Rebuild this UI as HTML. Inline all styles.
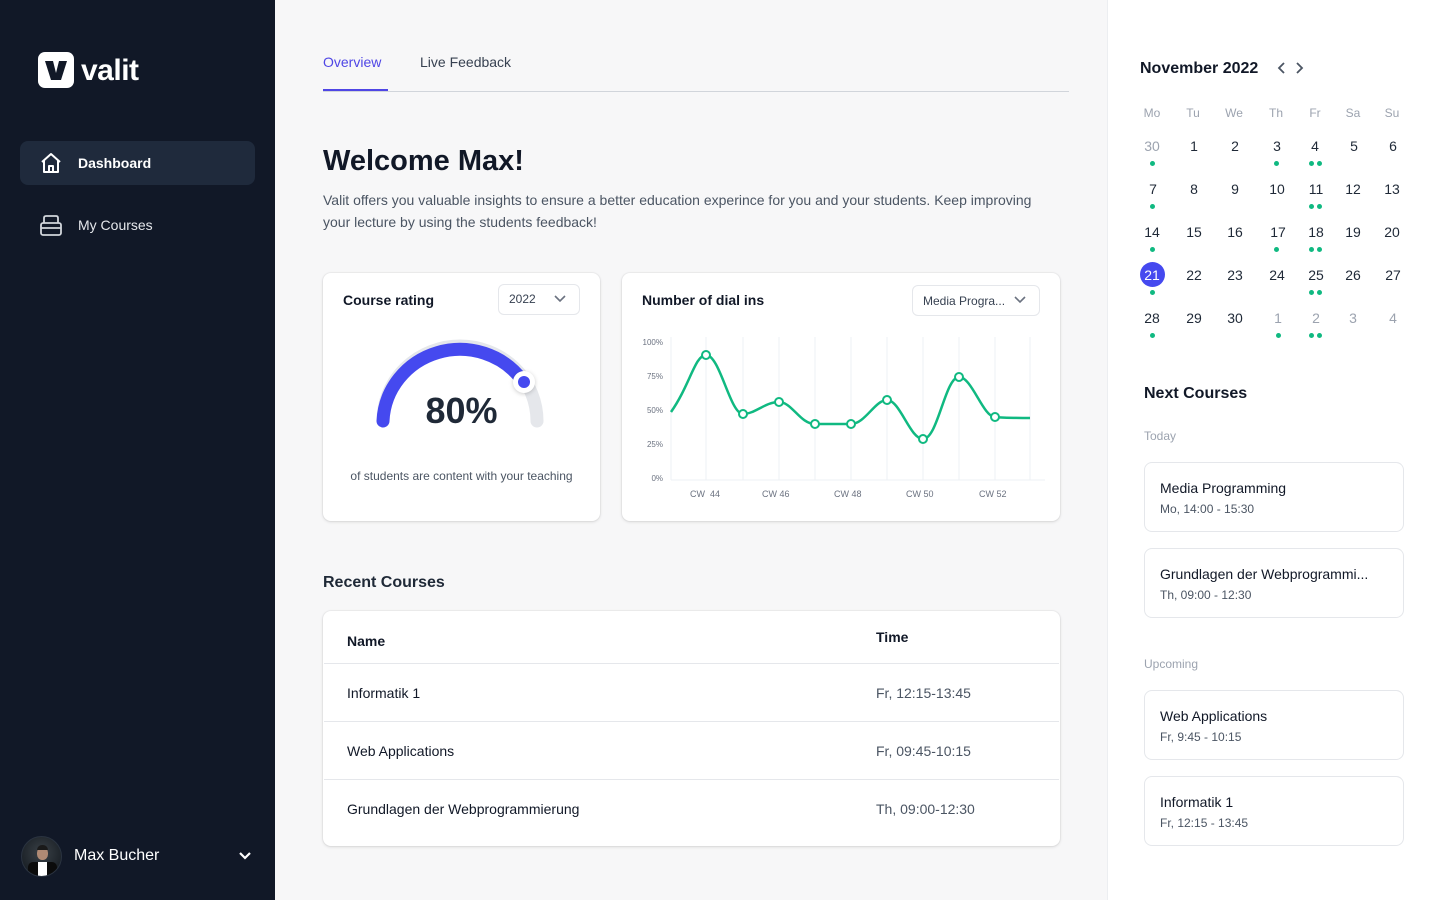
<!DOCTYPE html>
<html><head><meta charset="utf-8"><style>
*{margin:0;padding:0;box-sizing:border-box}
body{width:1440px;height:900px;overflow:hidden;font-family:"Liberation Sans",sans-serif;background:#f7f7f8;position:relative;color:#111827}
.a{position:absolute}
.side{left:0;top:0;width:275px;height:900px;background:#111827}
.right{left:1107px;top:0;width:333px;height:900px;background:#fff;border-left:1px solid #eceef1}
.card{background:#fff;border-radius:8px;box-shadow:0 1px 3px rgba(0,0,0,.12),0 0 0 1px rgba(0,0,0,.03)}
.sel{border:1px solid #e5e7eb;border-radius:6px;font-size:12px;color:#374151;background:#fff}
.cal{font-size:14px;color:#1f2937;text-align:center;width:30px}
.dot{width:5px;height:5px;border-radius:50%;background:#10b981}
.nc{left:1144px;width:260px;height:70px;border:1px solid #e5e7eb;border-radius:8px;background:#fff}
.nc b{position:absolute;left:15px;top:17px;font-size:14px;font-weight:normal;color:#111827}
.nc span{position:absolute;left:15px;top:39px;font-size:12px;color:#4b5563}
.row{left:324px;width:735px;height:1px;background:#e5e7eb}
.tn{left:347px;font-size:14px;color:#111827}
.tt{left:876px;font-size:14px;color:#4b5563}
.yl{font-size:8px;color:#6b7280;left:636px;width:27px;text-align:right}
.xl{font-size:9px;color:#6b7280}
</style></head><body>
<div class="a side"></div>
<div class="a" style="left:38px;top:52px;width:36px;height:36px;background:#fff;border-radius:7px"></div>
<svg class="a" style="left:38px;top:52px" width="36" height="36"><path d="M7 9 L15 9 L18 21 L21 9 L29 9 L23 28 L13 28 Z" fill="#111827"/></svg>
<div class="a" style="left:81px;top:54px;font-size:30px;font-weight:bold;color:#fff;letter-spacing:-0.5px">valit</div>
<div class="a" style="left:20px;top:141px;width:235px;height:44px;background:#1f2a3c;border-radius:8px"></div>
<svg class="a" style="left:39px;top:151px" width="24" height="24" fill="none" stroke="#fff" stroke-width="2" stroke-linejoin="round"><path d="M3 11 L12 3 L21 11 M5 9 V21 H19 V9 M10 21 V15 H14 V21"/></svg>
<div class="a" style="left:78px;top:155px;font-size:14px;font-weight:bold;color:#fff">Dashboard</div>
<svg class="a" style="left:39px;top:213px" width="24" height="24" fill="none" stroke="#d1d5db" stroke-width="1.8" stroke-linejoin="round"><rect x="2" y="10" width="20" height="12" rx="2"/><path d="M5 10 V5 Q5 3 7 3 H17 Q19 3 19 5 V10 M2 15 H22"/></svg>
<div class="a" style="left:78px;top:217px;font-size:14px;color:#e5e7eb">My Courses</div>
<div class="a" style="left:21px;top:836px;width:41px;height:41px;border-radius:50%;background:radial-gradient(circle at 50% 40%,#3a4147,#1c2228 70%);overflow:hidden;border:1px solid #2a3340"><div style="position:absolute;left:15px;top:10px;width:11px;height:13px;border-radius:45%;background:#b08a74"></div><div style="position:absolute;left:15px;top:8px;width:11px;height:5px;border-radius:5px 5px 0 0;background:#1a1a1a"></div><div style="position:absolute;left:16px;top:25px;width:9px;height:16px;background:#fff"></div><div style="position:absolute;left:6px;top:25px;width:10px;height:16px;background:#0b0b0b;border-radius:5px 0 0 0"></div><div style="position:absolute;left:25px;top:25px;width:10px;height:16px;background:#0b0b0b;border-radius:0 5px 0 0"></div></div>
<div class="a" style="left:74px;top:847px;font-size:16px;color:#fff">Max Bucher</div>
<svg class="a" style="left:237px;top:849px" width="16" height="14" fill="none" stroke="#fff" stroke-width="2.2"><path d="M3 4 L8 9 L13 4"/></svg>

<div class="a" style="left:323px;top:54px;font-size:14px;color:#4f46e5">Overview</div>
<div class="a" style="left:420px;top:54px;font-size:14px;color:#374151">Live Feedback</div>
<div class="a" style="left:323px;top:91px;width:746px;height:1px;background:#d1d5db"></div>
<div class="a" style="left:323px;top:89px;width:65px;height:2px;background:#4f46e5"></div>
<div class="a" style="left:323px;top:145px;font-size:29px;font-weight:bold;color:#111827">Welcome Max!</div>
<div class="a" style="left:323px;top:189px;width:728px;font-size:14px;line-height:22px;color:#4b5563">Valit offers you valuable insights to ensure a better education experince for you and your students. Keep improving your lecture by using the students feedback!</div>

<div class="a card" style="left:323px;top:273px;width:277px;height:248px"></div>
<div class="a" style="left:343px;top:292px;font-size:14px;font-weight:bold;color:#111827">Course rating</div>
<div class="a sel" style="left:498px;top:284px;width:82px;height:31px;padding:7px 10px">2022</div>
<svg class="a" style="left:553px;top:293px" width="14" height="12" fill="none" stroke="#6b7280" stroke-width="1.6"><path d="M2 3 L7 8 L12 3"/></svg>
<svg class="a" style="left:323px;top:273px" width="277" height="248">
<path d="M60 148 A77 75 0 0 1 214 148" fill="none" stroke="#e5e7eb" stroke-width="13" stroke-linecap="round"/>
<path d="M60 148 A77 75 0 0 1 199 107" fill="none" stroke="#4549ef" stroke-width="13" stroke-linecap="round"/>
<circle cx="201" cy="109" r="11" fill="#fff" style="filter:drop-shadow(0 1px 2px rgba(0,0,0,.2))"/>
<circle cx="201" cy="109" r="6" fill="#4549ef"/>
</svg>
<div class="a" style="left:323px;top:390px;width:277px;text-align:center;font-size:36px;font-weight:bold;color:#1f2937">80%</div>
<div class="a" style="left:323px;top:469px;width:277px;text-align:center;font-size:12px;color:#4b5563">of students are content with your teaching</div>

<div class="a card" style="left:622px;top:273px;width:438px;height:248px"></div>
<div class="a" style="left:642px;top:292px;font-size:14px;font-weight:bold;color:#111827">Number of dial ins</div>
<div class="a sel" style="left:912px;top:285px;width:128px;height:31px;padding:8px 10px">Media Progra...</div>
<svg class="a" style="left:1013px;top:294px" width="14" height="12" fill="none" stroke="#6b7280" stroke-width="1.6"><path d="M2 3 L7 8 L12 3"/></svg>
<div class="a yl" style="top:338px">100%</div><div class="a yl" style="top:372px">75%</div><div class="a yl" style="top:406px">50%</div><div class="a yl" style="top:440px">25%</div><div class="a yl" style="top:474px">0%</div>
<div class="a xl" style="left:690px;top:489px">CW &nbsp;44</div><div class="a xl" style="left:762px;top:489px">CW 46</div><div class="a xl" style="left:834px;top:489px">CW 48</div><div class="a xl" style="left:906px;top:489px">CW 50</div><div class="a xl" style="left:979px;top:489px">CW 52</div>
<svg class="a" style="left:0;top:0" width="1100" height="520">
<g stroke="#eef0f4" stroke-width="1"><path d="M671 337V480M706 337V480M743 337V480M779 337V480M815 337V480M851 337V480M887 337V480M923 337V480M959 337V480M995 337V480M1030 337V480M671 480H1045"/></g>
<path d="M671 412 C690 385,695 355,706 355 C720 355,730 414,743 414 C755 414,765 402,779 402 C792 402,800 424,815 424 C830 424,838 424,851 424 C865 424,875 400,887 400 C900 400,910 439,923 439 C938 439,945 377,959 377 C972 377,983 417,995 417 C1005 418,1020 418,1030 418" fill="none" stroke="#10b981" stroke-width="2.5"/>
<g fill="#fff" stroke="#10b981" stroke-width="2"><circle cx="706" cy="355" r="4"/><circle cx="743" cy="414" r="4"/><circle cx="779" cy="402" r="4"/><circle cx="815" cy="424" r="4"/><circle cx="851" cy="424" r="4"/><circle cx="887" cy="400" r="4"/><circle cx="923" cy="439" r="4"/><circle cx="959" cy="377" r="4"/><circle cx="995" cy="417" r="4"/></g>
</svg>

<div class="a" style="left:323px;top:574px;font-size:16px;font-weight:bold;color:#1f2937">Recent Courses</div>
<div class="a card" style="left:323px;top:611px;width:737px;height:235px"></div>
<div class="a" style="left:347px;top:633px;font-size:14px;font-weight:bold">Name</div>
<div class="a" style="left:876px;top:629px;font-size:14px;font-weight:bold">Time</div>
<div class="a row" style="top:663px"></div><div class="a row" style="top:721px"></div><div class="a row" style="top:779px"></div>
<div class="a tn" style="top:685px">Informatik 1</div><div class="a tt" style="top:685px">Fr, 12:15-13:45</div>
<div class="a tn" style="top:743px">Web Applications</div><div class="a tt" style="top:743px">Fr, 09:45-10:15</div>
<div class="a tn" style="top:801px">Grundlagen der Webprogrammierung</div><div class="a tt" style="top:801px">Th, 09:00-12:30</div>

<div class="a right"></div>
<div class="a" style="left:1140px;top:60px;font-size:16px;font-weight:bold;color:#111827">November 2022</div>
<svg class="a" style="left:1275px;top:61px" width="34" height="14" fill="none" stroke="#4b5563" stroke-width="1.8"><path d="M9 2 L4 7 L9 12 M22 2 L27 7 L22 12"/></svg>
<div class="a" style="left:1144px;top:385px;font-size:16px;font-weight:bold;color:#111827">Next Courses</div>
<div class="a" style="left:1144px;top:429px;font-size:12px;color:#9ca3af">Today</div>
<div class="a nc" style="top:462px"><b>Media Programming</b><span>Mo, 14:00 - 15:30</span></div>
<div class="a nc" style="top:548px"><b>Grundlagen der Webprogrammi...</b><span>Th, 09:00 - 12:30</span></div>
<div class="a" style="left:1144px;top:657px;font-size:12px;color:#9ca3af">Upcoming</div>
<div class="a nc" style="top:690px"><b>Web Applications</b><span>Fr, 9:45 - 10:15</span></div>
<div class="a nc" style="top:776px"><b>Informatik 1</b><span>Fr, 12:15 - 13:45</span></div>

<div class="a cal" style="left:1137px;top:106px;font-size:12px;color:#9ca3af">Mo</div>
<div class="a cal" style="left:1178px;top:106px;font-size:12px;color:#9ca3af">Tu</div>
<div class="a cal" style="left:1219px;top:106px;font-size:12px;color:#9ca3af">We</div>
<div class="a cal" style="left:1261px;top:106px;font-size:12px;color:#9ca3af">Th</div>
<div class="a cal" style="left:1300px;top:106px;font-size:12px;color:#9ca3af">Fr</div>
<div class="a cal" style="left:1338px;top:106px;font-size:12px;color:#9ca3af">Sa</div>
<div class="a cal" style="left:1377px;top:106px;font-size:12px;color:#9ca3af">Su</div>

<div class="a" style="left:1140px;top:262px;width:25px;height:25px;border-radius:50%;background:#4549ef"></div>
<div class="a cal" style="left:1137px;top:138px;color:#9ca3af">30</div><div class="a cal" style="left:1179px;top:138px">1</div><div class="a cal" style="left:1220px;top:138px">2</div><div class="a cal" style="left:1262px;top:138px">3</div><div class="a cal" style="left:1300px;top:138px">4</div><div class="a cal" style="left:1339px;top:138px">5</div><div class="a cal" style="left:1378px;top:138px">6</div>
<div class="a cal" style="left:1138px;top:181px">7</div><div class="a cal" style="left:1179px;top:181px">8</div><div class="a cal" style="left:1220px;top:181px">9</div><div class="a cal" style="left:1262px;top:181px">10</div><div class="a cal" style="left:1301px;top:181px">11</div><div class="a cal" style="left:1338px;top:181px">12</div><div class="a cal" style="left:1377px;top:181px">13</div>
<div class="a cal" style="left:1137px;top:224px">14</div><div class="a cal" style="left:1179px;top:224px">15</div><div class="a cal" style="left:1220px;top:224px">16</div><div class="a cal" style="left:1263px;top:224px">17</div><div class="a cal" style="left:1301px;top:224px">18</div><div class="a cal" style="left:1338px;top:224px">19</div><div class="a cal" style="left:1377px;top:224px">20</div>
<div class="a cal" style="left:1137px;top:267px;color:#fff">21</div><div class="a cal" style="left:1179px;top:267px">22</div><div class="a cal" style="left:1220px;top:267px">23</div><div class="a cal" style="left:1262px;top:267px">24</div><div class="a cal" style="left:1301px;top:267px">25</div><div class="a cal" style="left:1338px;top:267px">26</div><div class="a cal" style="left:1378px;top:267px">27</div>
<div class="a cal" style="left:1137px;top:310px">28</div><div class="a cal" style="left:1179px;top:310px">29</div><div class="a cal" style="left:1220px;top:310px">30</div><div class="a cal" style="left:1263px;top:310px;color:#9ca3af">1</div><div class="a cal" style="left:1301px;top:310px;color:#9ca3af">2</div><div class="a cal" style="left:1338px;top:310px;color:#9ca3af">3</div><div class="a cal" style="left:1378px;top:310px;color:#9ca3af">4</div>
<div class="a dot" style="left:1150px;top:161px"></div><div class="a dot" style="left:1274px;top:161px"></div><div class="a dot" style="left:1309px;top:161px"></div><div class="a dot" style="left:1317px;top:161px"></div>
<div class="a dot" style="left:1150px;top:204px"></div><div class="a dot" style="left:1309px;top:204px"></div><div class="a dot" style="left:1317px;top:204px"></div>
<div class="a dot" style="left:1150px;top:247px"></div><div class="a dot" style="left:1274px;top:247px"></div><div class="a dot" style="left:1309px;top:247px"></div><div class="a dot" style="left:1317px;top:247px"></div>
<div class="a dot" style="left:1150px;top:290px"></div><div class="a dot" style="left:1309px;top:290px"></div><div class="a dot" style="left:1317px;top:290px"></div>
<div class="a dot" style="left:1150px;top:333px"></div><div class="a dot" style="left:1276px;top:333px"></div><div class="a dot" style="left:1309px;top:333px"></div><div class="a dot" style="left:1317px;top:333px"></div>
</body></html>
